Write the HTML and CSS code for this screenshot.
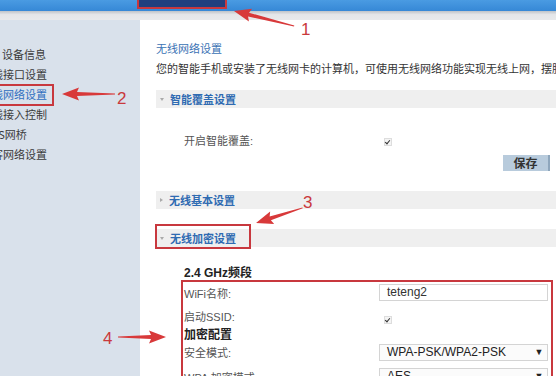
FILE: index.html
```html
<!DOCTYPE html>
<html>

<head>
  <meta charset="UTF-8">
  <title>无线网络设置</title>
  <link rel="stylesheet" href="styles.css">
</head>

<body>
  <div class="topbar">
    <div class="tab"></div>
  </div>
  <div class="subbar"></div>

  <div class="page">
    <nav class="sidebar">
      <ul class="menu">
        <li class="item first">设备信息</li>
        <li class="item">有线接口设置</li>
        <li class="item active">无线网络设置</li>
        <li class="item">无线接入控制</li>
        <li class="item">WDS网桥</li>
        <li class="item">访客网络设置</li>
      </ul>
    </nav>

    <main class="content">
      <h1 class="title">无线网络设置</h1>
      <p class="desc">您的智能手机或安装了无线网卡的计算机，可使用无线网络功能实现无线上网，摆脱网线的束缚。</p>

      <div class="bar open"><span class="caret"></span>智能覆盖设置</div>
      <div class="row cover">
        <span class="label">开启智能覆盖:</span>
        <span class="check"></span>
      </div>
      <div class="actions">
        <button class="btn">保存</button>
      </div>

      <div class="bar closed"><span class="caret"></span>无线基本设置</div>
      <div class="bar open gap"><span class="caret"></span>无线加密设置</div>

      <div class="band">2.4 GHz频段</div>
      <div class="fields">
        <div class="row r-name">
          <span class="label">WiFi名称:</span>
          <div class="field">teteng2</div>
        </div>
        <div class="row r-ssid">
          <span class="label">启动SSID:</span>
          <span class="check low"></span>
        </div>
        <div class="row r-group">
          <span class="group">加密配置</span>
        </div>
        <div class="row r-mode">
          <span class="label">安全模式:</span>
          <div class="field select">WPA-PSK/WPA2-PSK<span class="arrow">▼</span></div>
        </div>
        <div class="row r-wpa">
          <span class="label">WPA 加密模式:</span>
          <div class="field select">AES<span class="arrow">▼</span></div>
        </div>
      </div>
    </main>
  </div>

  <!-- annotation marks drawn over the screenshot -->
  <svg class="notes" width="556" height="376" viewBox="0 0 556 376">
    <g fill="none" stroke="#c8383e" stroke-width="2">
      <rect x="138" y="-2" width="88" height="10" />
      <rect x="-2" y="85" width="55" height="20" />
      <rect x="156" y="225" width="94" height="23" />
      <rect x="182" y="281" width="370" height="110" />
    </g>
    <g fill="#d8393a">
      <polygon transform="translate(234 11) rotate(194)" points="0,0 -17,-6.5 -15,-2 -62,-0.5 -62,0.5 -15,2 -17,6.5" />
      <polygon transform="translate(62 94) rotate(180)" points="0,0 -17,-6.5 -15,-2 -53,-0.5 -53,0.5 -15,2 -17,6.5" />
      <polygon transform="translate(256 223) rotate(162)" points="0,0 -17,-6.5 -15,-2 -49,-0.5 -49,0.5 -15,2 -17,6.5" />
      <polygon transform="translate(166 337) rotate(0)" points="0,0 -17,-6.5 -15,-2 -48,-0.5 -48,0.5 -15,2 -17,6.5" />
    </g>
    <g class="num" fill="#c9393c">
      <text x="301" y="35">1</text>
      <text x="117" y="104">2</text>
      <text x="303" y="208">3</text>
      <text x="103" y="344">4</text>
    </g>
  </svg>
</body>

</html>
```

FILE: styles.css
```css
body {
  margin: 0;
  width: 556px;
  height: 376px;
  overflow: hidden;
  position: relative;
  background: #fff;
  font-family: "Liberation Sans", "Noto Sans CJK SC", sans-serif;
  font-size: 11px;
  color: #444;
}

.topbar {
  height: 11px;
  background: linear-gradient(#4a9be2, #3688d6);
}

.tab {
  margin-left: 138px;
  width: 88px;
  height: 8px;
  background: #213f7e;
}

.subbar {
  height: 9px;
  background: linear-gradient(#bfc3c8, #e4e6e9 40%, #e8e9eb);
}

.page {
  display: flex;
  height: 356px;
}

.sidebar {
  width: 140px;
  flex-shrink: 0;
  background: #d9e1eb;
  overflow: hidden;
}

.menu {
  list-style: none;
  margin: 0;
  padding: 24px 0 0 3px;
}

.item {
  height: 20px;
  line-height: 20px;
  white-space: nowrap;
  text-indent: -22px;
  color: #3a3a3a;
  font-family: "Noto Sans CJK SC", sans-serif;
}

.item.first {
  text-indent: -1px;
}

.item.active {
  color: #2f6fc0;
}

.content {
  flex: 1;
  overflow: hidden;
  padding: 18px 0 0 16px;
  white-space: nowrap;
}

.title {
  margin: 0;
  font-size: 11px;
  font-weight: normal;
  line-height: 20px;
  color: #3a72b4;
  font-family: "Noto Sans CJK SC", sans-serif;
}

.desc {
  margin: 0;
  line-height: 20px;
  color: #333;
  font-family: "Noto Sans CJK SC", sans-serif;
}

.bar {
  display: flex;
  align-items: center;
  height: 18px;
  margin-top: 12px;
  padding-left: 4px;
  background: #efefef;
  font-weight: bold;
  color: #2f6bb2;
  font-family: "Noto Sans CJK SC", sans-serif;
}

.bar.closed,
.bar.gap {
  margin-top: 20px;
}

.caret {
  width: 0;
  height: 0;
  margin-right: 6px;
}

.bar.open .caret {
  border-left: 2px solid transparent;
  border-right: 2px solid transparent;
  border-top: 3px solid #aaa;
}

.bar.closed .caret {
  border-top: 2px solid transparent;
  border-bottom: 2px solid transparent;
  border-left: 3px solid #aaa;
}

.row {
  display: flex;
  align-items: center;
}

.label {
  width: 195px;
  flex-shrink: 0;
  color: #555;
}

.row.cover {
  height: 20px;
  margin-top: 22px;
  padding-left: 28px;
}

.check {
  width: 6px;
  height: 6px;
  margin-left: 5px;
  margin-top: 3px;
  border: 1px solid #ddd;
  background: #f4f4f4;
  position: relative;
}

.check::after {
  content: "";
  position: absolute;
  left: 1px;
  top: 0;
  width: 2px;
  height: 4px;
  border-right: 1px solid #333;
  border-bottom: 1px solid #333;
  transform: rotate(40deg);
}

.check.low {
  margin-top: 8px;
}

.actions {
  display: flex;
  justify-content: flex-end;
  margin-top: 5px;
  padding-right: 6px;
}

.btn {
  width: 47px;
  height: 16px;
  padding: 0;
  border: 0;
  border-right: 2px solid #8ea6bc;
  background: #b8cbdc;
  color: #333;
  font-weight: bold;
  font-size: 12px;
  font-family: "Noto Sans CJK SC", sans-serif;
  line-height: 16px;
}

.band {
  margin-top: 18px;
  padding-left: 28px;
  line-height: 16px;
  font-size: 12px;
  font-weight: bold;
  color: #222;
}

.fields {
  margin: 0 4px 0 26px;
  border: 2px solid transparent;
}

.r-name {
  height: 19px;
}

.field {
  width: 160px;
  height: 15px;
  padding-left: 7px;
  border: 1px solid #d4d4d4;
  background: #fff;
  line-height: 15px;
  font-size: 12px;
  color: #333;
  display: flex;
  justify-content: space-between;
}

.field.select {
  background: #fbfbfb;
  color: #222;
  padding-right: 0;
  width: 160px;
}

.arrow {
  font-size: 9px;
  width: 16px;
  text-align: center;
  color: #222;
}

.r-ssid {
  height: 18px;
  margin-top: 5px;
}

.r-group {
  height: 16px;
}

.group {
  font-size: 12px;
  font-weight: bold;
  color: #222;
  font-family: "Noto Sans CJK SC", sans-serif;
}

.r-mode {
  height: 18px;
  margin-top: 2px;
}

.r-wpa {
  height: 20px;
  margin-top: 4px;
  align-items: flex-end;
}

.notes {
  position: absolute;
  top: 0;
  left: 0;
  pointer-events: none;
}

.num text {
  font-family: "Liberation Sans", sans-serif;
  font-size: 17px;
}
```
